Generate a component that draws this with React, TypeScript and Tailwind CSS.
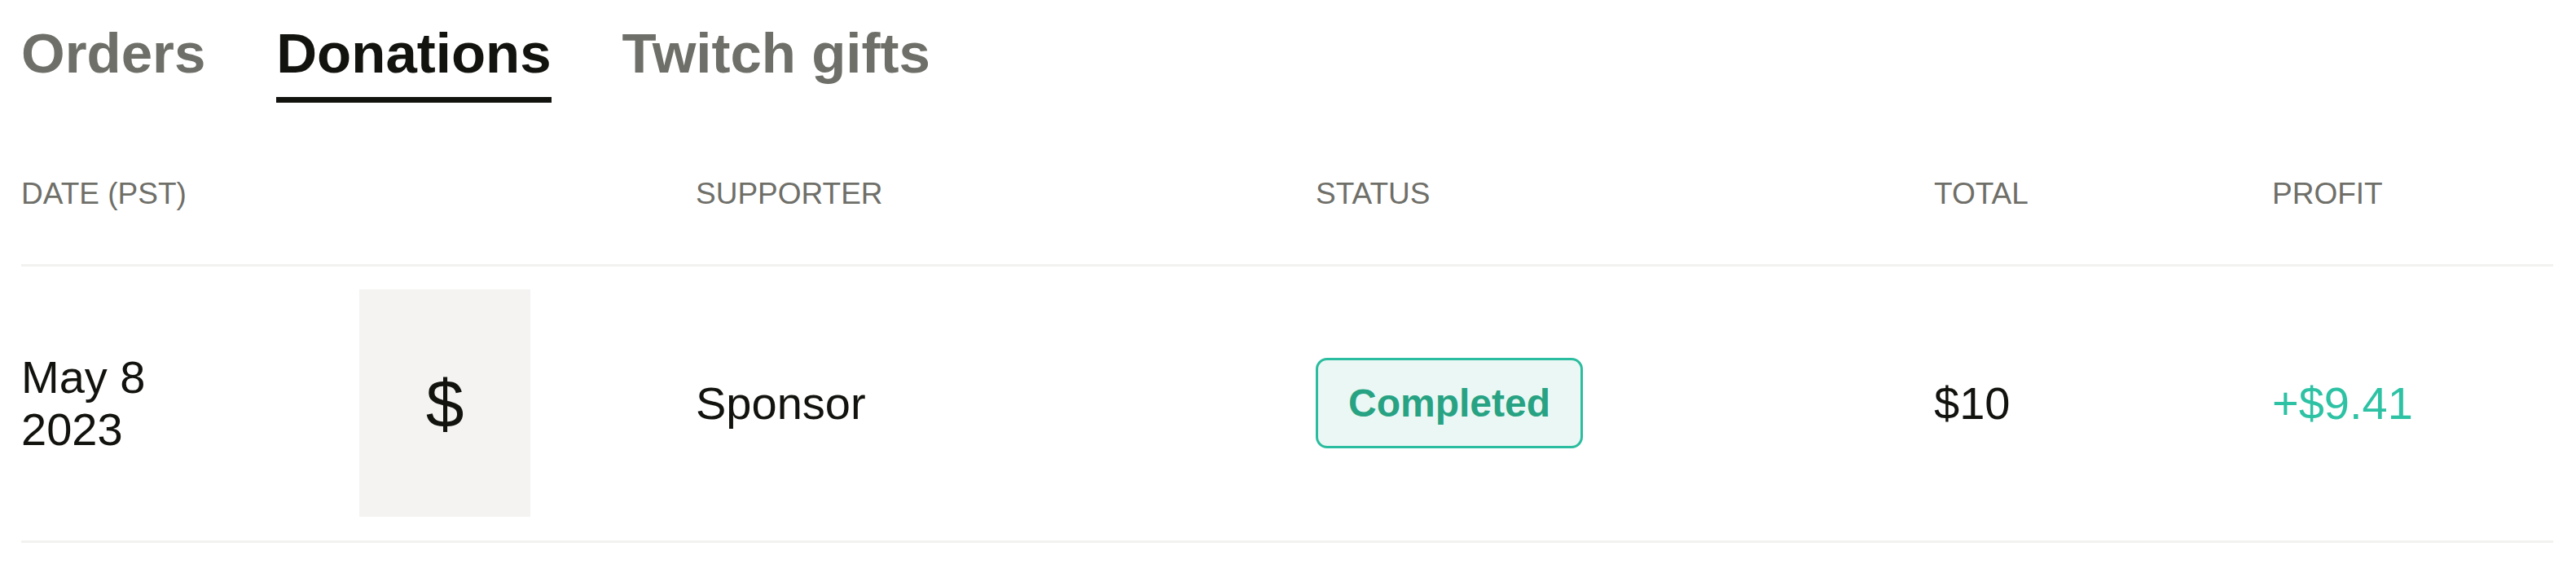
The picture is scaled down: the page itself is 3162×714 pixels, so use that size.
const font = { fontFamily: '"Liberation Sans", Arial, sans-serif' };

const tabs = [
  { label: "Orders", active: false },
  { label: "Donations", active: true },
  { label: "Twitch gifts", active: false },
];

const cols = "grid grid-cols-[415px_413px_761px_759px_415px_1fr]";

export default function App() {
  return (
    <div className="min-h-screen bg-white pl-[26px] pr-[28px] text-[#12120e]" style={font}>
      <nav className="flex gap-[87px] pt-[27px]">
        {tabs.map((t) => (
          <button
            key={t.label}
            className={
              t.active
                ? "border-b-[7px] border-[#12120e] pb-[14px] text-[69px] font-bold leading-[78px] text-[#12120e]"
                : "border-b-[7px] border-transparent pb-[14px] text-[69px] font-bold leading-[78px] text-[#6f6f69]"
            }
          >
            {t.label}
          </button>
        ))}
      </nav>

      <div className={`${cols} mt-[90px] border-b-[3px] border-[#f2f2f1] pb-[64px] text-[37px] leading-[44px] text-[#6f6f69]`}>
        <div className="col-span-2">DATE (PST)</div>
        <div>SUPPORTER</div>
        <div>STATUS</div>
        <div>TOTAL</div>
        <div>PROFIT</div>
      </div>

      <div className={`${cols} items-center border-b-[3px] border-[#f2f2f1] pt-[28px] pb-[29px] text-[56px] leading-[64px]`}>
        <div>
          May 8
          <br />
          2023
        </div>
        <div className="flex h-[279px] w-[210px] items-center justify-center bg-[#f4f3f1] text-[84px]">
          $
        </div>
        <div>Sponsor</div>
        <div>
          <span className="inline-flex h-[111px] items-center rounded-[14px] border-[3px] border-[#2bbd9f] bg-[#ebf7f4] px-[37px] text-[48px] font-bold text-[#27a383]">
            Completed
          </span>
        </div>
        <div>$10</div>
        <div className="text-[#2ec2a4]">+$9.41</div>
      </div>
    </div>
  );
}
